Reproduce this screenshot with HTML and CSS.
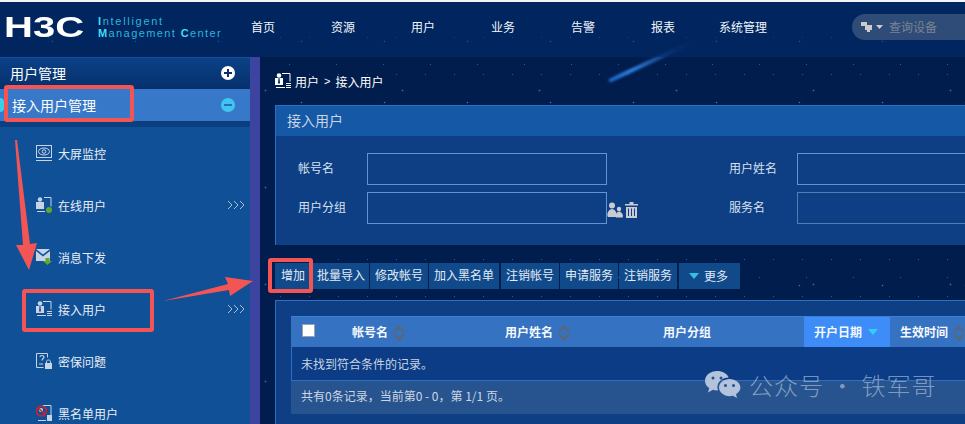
FILE: index.html
```html
<!DOCTYPE html>
<html lang="en">
<head>
  <meta charset="utf-8" />
  <title>接入用户</title>
  <link rel="stylesheet" href="styles.css">
</head>
<body>
  <div class="page">
    <div class="streak"></div>

    <div class="top-bar">
      <div class="logo">
        <div class="logo-mark"><span>H3C</span></div>
        <div class="logo-text">
          <div class="logo-line1"><b>I</b>ntelligent</div>
          <div><b>M</b>anagement <b>C</b>enter</div>
        </div>
      </div>
      <div class="nav">
        <div class="nav-item">首页</div>
        <div class="nav-item">资源</div>
        <div class="nav-item">用户</div>
        <div class="nav-item">业务</div>
        <div class="nav-item">告警</div>
        <div class="nav-item">报表</div>
        <div class="nav-item">系统管理</div>
      </div>
      <div class="search">
        <svg width="22" height="12" viewBox="0 0 22 12"><path fill="#ccc" d="M0 1h6v4H0zM4 4h7v5H9v2H6V9H4z"/><path fill="#ccc" d="M15 4h7l-3.500 4z"/></svg>
        <span>查询设备</span>
      </div>
    </div>

    <div class="main">
      <div class="sidebar">
        <div class="side-head">
          <span>用户管理</span>
          <svg width="14" height="14" viewBox="0 0 14 14"><circle cx="7" cy="7" r="7" fill="#fff"/><path stroke="#0a2f66" stroke-width="2" d="M3 7h8M7 3v8"/></svg>
        </div>
        <div class="side-active">
          <span>接入用户管理</span>
          <svg width="14" height="14" viewBox="0 0 14 14"><circle cx="7" cy="7" r="7" fill="#3fc6ee"/><path stroke="#2a6cc0" stroke-width="2" d="M3 7h8"/></svg>
        </div>
        <div class="side-gap"></div>
        <div class="side-list">
          <div class="side-item">
            <svg class="item-icon" viewBox="0 0 16 16" fill="none" stroke="#c6d4e6"><rect x=".5" y=".5" width="15" height="12"/><ellipse cx="8" cy="6.500" rx="5.500" ry="3.500"/><circle cx="8" cy="6.500" r="1.800"/><path d="M0 15.500h16"/></svg>
            <span>大屏监控</span>
          </div>
          <div class="side-item">
            <svg class="item-icon" viewBox="0 0 16 16"><path fill="none" stroke="#c6d4e6" d="M8 .5h7v9M1 14.500h8"/><circle cx="4" cy="2.500" r="2.200" fill="#c6d4e6"/><path fill="#c6d4e6" d="M0 5h8v7H0z"/><circle cx="13" cy="13" r="3" fill="#5fa82a"/></svg>
            <span>在线用户</span>
            <svg class="more" width="17" height="10" viewBox="0 0 17 10" fill="none" stroke="#a9bfdc"><path d="M0 1l4 4-4 4M6 1l4 4-4 4M12 1l4 4-4 4"/></svg>
          </div>
          <div class="side-item">
            <svg class="item-icon" viewBox="0 0 16 16"><path fill="#c6d4e6" d="M0 0h14L7 5.500zM0 2l7 5.500L14 2v10H0z"/><path fill="#5fa82a" d="M9.500 9h4v3H16l-4.500 4L7 12h2.500z"/></svg>
            <span>消息下发</span>
          </div>
          <div class="side-item">
            <svg class="item-icon" viewBox="0 0 16 16"><use href="#user-doc"/></svg>
            <span>接入用户</span>
            <svg class="more" width="17" height="10" viewBox="0 0 17 10" fill="none" stroke="#a9bfdc"><path d="M0 1l4 4-4 4M6 1l4 4-4 4M12 1l4 4-4 4"/></svg>
          </div>
          <div class="side-item">
            <svg class="item-icon" viewBox="0 0 16 16"><path fill="none" stroke="#c6d4e6" d="M.5.500h11v4M.5.500v14h7"/><path fill="none" stroke="#c6d4e6" stroke-width="1.200" d="M4 4c0-2 4-2 4 0 0 1.500-2 1.500-2 3.500M3 11h4"/><path fill="#c6d4e6" d="M9 10h7v6H9z"/><path fill="none" stroke="#c6d4e6" d="M10.500 10V8.500c0-2 4-2 4 0V10"/></svg>
            <span>密保问题</span>
          </div>
          <div class="side-item">
            <svg class="item-icon" viewBox="0 0 16 16"><path fill="none" stroke="#c6d4e6" d="M7 .5h8v10M2 15.500h8"/><path fill="#c6d4e6" d="M11 10h5v6h-5z"/><circle cx="5" cy="5" r="2" fill="#c6d4e6"/><circle cx="5.500" cy="6" r="5" fill="none" stroke="#d8202c" stroke-width="1.500"/><path stroke="#d8202c" stroke-width="1.500" d="M2 2.500l7 7"/></svg>
            <span>黑名单用户</span>
          </div>
        </div>
      </div>
      <div class="side-stripe"></div>

      <div class="content">
        <div class="crumb">
          <svg class="crumb-icon" viewBox="0 0 16 16"><use href="#user-doc-white"/></svg>
          <span>用户</span><span class="crumb-sep">&gt;</span><span>接入用户</span>
        </div>

        <div class="panel">
          <div class="panel-title">接入用户</div>
          <div class="form">
            <label>帐号名</label>
            <div class="field"></div>
            <div></div>
            <label>用户姓名</label>
            <div class="field"></div>
            <label>用户分组</label>
            <div class="field"></div>
            <div class="field-tools">
              <svg width="16" height="16" viewBox="0 0 16 16" fill="#c8ccd2"><circle cx="5" cy="3.500" r="3"/><path d="M1 15c-2-3 1-8 4-8s6 5 4 8z"/><circle cx="12" cy="7" r="2.200"/><path d="M9 15.500c-1-2 .5-6 3-6s5 4 3.500 6z"/></svg>
              <svg width="13" height="16" viewBox="0 0 13 16" fill="#c8ccd2"><path d="M0 2h4.500V0h4v2H13v1.500H0zM1 5h11v11H1zm2 1.500V14h1V6.500zm3 0V14h1V6.500zm3 0V14h1V6.500z" fill-rule="evenodd"/></svg>
            </div>
            <label>服务名</label>
            <div class="field field-dim"></div>
          </div>
        </div>

        <div class="toolbar">
          <div class="tool-btn tool-first">增加</div>
          <div class="tool-btn tool-tight">批量导入</div>
          <div class="tool-btn">修改帐号</div>
          <div class="tool-btn tool-wide">加入黑名单</div>
          <div class="tool-btn">注销帐号</div>
          <div class="tool-btn">申请服务</div>
          <div class="tool-btn">注销服务</div>
          <div class="tool-btn tool-more"><i class="caret"></i>更多</div>
        </div>

        <div class="panel table-panel">
          <div class="grid-head">
            <div class="col col-check"><i class="check"></i></div>
            <div class="col col-name">帐号名<i class="sort"></i></div>
            <div class="col col-user">用户姓名<i class="sort"></i></div>
            <div class="col col-group">用户分组</div>
            <div class="col col-date">开户日期<i class="caret caret-cyan"></i></div>
            <div class="col col-time">生效时间<i class="sort"></i></div>
          </div>
          <div class="grid-empty">未找到符合条件的记录。</div>
          <div class="grid-foot">共有0条记录，当前第0 - 0，第 1/1 页。</div>
        </div>
      </div>
    </div>

    <svg class="marks" width="965" height="424" viewBox="0 0 965 424">
      <g fill="none" stroke="#f35555" stroke-width="4">
        <rect x="6" y="87" width="126" height="33" rx="1"/>
        <rect x="24" y="291" width="128" height="39" rx="1"/>
        <rect x="270" y="260" width="41" height="31" rx="1"/>
      </g>
      <g fill="#f35555">
        <path d="M15 140h2l13 104 7-1-8 27-13-25 7 0z"/>
        <path d="M163 301l65-17-3-7 28 4-23 15-1-6z"/>
      </g>
    </svg>

    <div class="watermark">
      <svg width="36" height="30" viewBox="0 0 36 30"><path fill="#b3c3dc" d="M12 1C5.500 1 0 5.300 0 10.700c0 3 1.700 5.600 4.300 7.400L3 22.500l5-2.700c1.300.4 2.700.6 4.100.6.100 0 .6 0 .9-.1-.4-1.100-.6-2.200-.6-3.300 0-5.300 5-9.600 11.300-9.600C22 3.600 17.500 1 12 1z"/><path fill="#b3c3dc" d="M24.500 9C18.700 9 14 12.900 14 17.600s4.700 8.600 10.500 8.600c1.200 0 2.300-.2 3.400-.5l4.100 2.200-1-3.600c2.700-1.600 4.400-4 4.400-6.700C35.500 12.900 30.300 9 24.500 9z"/><circle cx="8" cy="8" r="1.500" fill="#274f8d"/><circle cx="16" cy="8" r="1.500" fill="#274f8d"/><circle cx="20.500" cy="15.500" r="1.500" fill="#274f8d"/><circle cx="28.500" cy="15.500" r="1.500" fill="#274f8d"/></svg>
      <span>公众号 · 铁军哥</span>
    </div>
  </div>

  <svg width="0" height="0" class="defs">
    <symbol id="user-doc" viewBox="0 0 16 16"><path fill="none" stroke="#c6d4e6" d="M7 .5h8v8M1 14.500h9"/><circle cx="4" cy="2.500" r="2.300" fill="#c6d4e6"/><path fill="#c6d4e6" d="M0 5h8v7H0z"/><path fill="#274f8d" d="M3.500 5h1l.5 5-1 1-1-1z"/><path stroke="#c6d4e6" d="M11 10.500h5M11 12.500h5M11 14.500h5"/></symbol>
    <symbol id="user-doc-white" viewBox="0 0 16 16"><path fill="none" stroke="#fff" d="M7 .5h8v8M1 14.500h9"/><circle cx="4" cy="2.500" r="2.300" fill="#fff"/><path fill="#fff" d="M0 5h8v7H0z"/><path fill="#02205a" d="M3.500 5h1l.5 5-1 1-1-1z"/><path stroke="#fff" d="M11 10.500h5M11 12.500h5M11 14.500h5"/></symbol>
  </svg>
</body>
</html>
```

FILE: styles.css
```css
* {
  box-sizing: border-box;
}
body {
  margin: 0;
  background: #011d4d;
  font-family: "Noto Sans CJK SC", "Liberation Sans", sans-serif;
  font-size: 12px;
  color: #fff;
  overflow: hidden;
}
.page {
  position: relative;
  width: 965px;
  height: 424px;
  overflow: hidden;
  border-top: 2px solid #f2f4f7;
  background-color: #011d4d;
  background-image:
    radial-gradient(circle, #2a7fd6 0, transparent 1.2px),
    radial-gradient(circle, #1c5fae 0, transparent 1px),
    radial-gradient(circle, #2569bd 0, transparent 1.5px),
    radial-gradient(circle, #1c5fae 0, transparent 1px);
  background-size: 83px 61px, 47px 71px, 137px 97px, 29px 37px;
  background-position: 11px 9px, 31px 27px, 60px 40px, 5px 17px;
}
.defs {
  position: absolute;
}

/* top bar */
.top-bar {
  position: relative;
  display: flex;
  align-items: center;
  height: 55px;
  background-color: rgba(1, 44, 110, .55);
  padding-bottom: 6px;
}
.logo {
  display: flex;
  align-items: center;
  width: 223px;
  flex: none;
}
.logo-mark {
  width: 98px;
  padding-left: 4px;
  font-family: "Liberation Sans", sans-serif;
  font-size: 29px;
  font-weight: 700;
  line-height: 28px;
  color: #fff;
}
.logo-mark span {
  display: inline-block;
  transform: scaleX(1.38);
  transform-origin: left center;
}
.logo-text {
  font-family: "Liberation Sans", sans-serif;
  font-size: 11px;
  line-height: 12px;
  letter-spacing: 1.4px;
  color: #2cb5da;
}
.logo-line1 {
  letter-spacing: 1.7px;
}
.logo-text b {
  color: #3fdcf5;
}
.nav {
  display: flex;
  flex: none;
}
.nav-item {
  width: 80px;
  text-align: center;
  line-height: 18px;
  color: #f2f5fa;
}
.search {
  display: flex;
  align-items: center;
  gap: 6px;
  margin-left: 69px;
  width: 130px;
  height: 26px;
  padding-left: 9px;
  border-radius: 13px;
  background: #2f4c78;
  color: #7a8391;
  flex: none;
}

/* layout */
.main {
  position: relative;
  display: flex;
  height: 367px;
}
.sidebar {
  width: 250px;
  flex: none;
  background: #105096;
}
.side-head {
  display: flex;
  justify-content: space-between;
  align-items: center;
  height: 32px;
  padding: 0 15px 2px 10px;
  font-size: 14px;
  background: linear-gradient(#0b4186, #06306c);
  border-top: 1px solid #124f9c;
}
.side-active {
  position: relative;
  display: flex;
  justify-content: space-between;
  align-items: center;
  height: 32px;
  padding: 0 15px 1px 12px;
  font-size: 14px;
  background: #3878c8;
}
.side-active::before {
  content: "";
  position: absolute;
  left: -4px;
  top: 9px;
  width: 8px;
  height: 14px;
  border-radius: 4px;
  background: #36d0ea;
}
.side-gap {
  height: 6px;
  background: #0b3f80;
}
.side-item {
  display: flex;
  align-items: center;
  gap: 6px;
  height: 52px;
  padding-left: 36px;
  color: #e8eef6;
}
.item-icon {
  width: 16px;
  height: 16px;
  flex: none;
}
.more {
  margin-left: auto;
  margin-right: 5px;
}
.side-stripe {
  width: 10px;
  flex: none;
  background: #3c44a0;
}
.content {
  flex: none;
  width: 705px;
  padding-left: 15px;
}
.crumb {
  display: flex;
  align-items: center;
  height: 48px;
  color: #fff;
}
.crumb-icon {
  width: 16px;
  height: 16px;
  margin-right: 4px;
}
.crumb-sep {
  margin: 0 5px;
  font-family: "Liberation Sans", sans-serif;
  font-size: 11px;
}

/* panels */
.panel {
  width: 720px;
  border: 1px solid #2c6fc0;
  border-width: 1px 0 0 1px;
  background: #0e3f84;
}
.panel-title {
  height: 30px;
  padding-left: 11px;
  background: #1558a6;
  font-size: 14px;
  line-height: 28px;
  color: #c9d6e6;
}
.form {
  display: grid;
  grid-template-columns: 69px 240px 122px 68px 240px;
  grid-auto-rows: 32px;
  row-gap: 7px;
  align-items: center;
  height: 109px;
  padding: 17px 0 0 22px;
}
.form label {
  padding-bottom: 3px;
  color: #d7e1ee;
}
.field {
  height: 32px;
  border: 1px solid #5b98d2;
}
.field-dim {
  border-color: #4a7fb8;
}
.field-tools {
  display: flex;
  align-items: center;
  gap: 2px;
  padding-top: 4px;
}

/* toolbar */
.toolbar {
  display: flex;
  gap: 1px;
  height: 26px;
  margin-top: 18px;
  white-space: nowrap;
}
.tool-btn {
  padding: 0 5px;
  line-height: 24px;
  background: #114a8a;
  color: #e3ebf5;
}
.tool-first {
  width: 37px;
  padding: 0 6px;
}
.tool-tight {
  padding: 0 4px;
}
.tool-wide {
  margin-right: 1px;
}
.tool-more {
  display: flex;
  align-items: center;
  gap: 5px;
  width: 61px;
  padding-left: 10px;
  margin-left: 1px;
}
.caret {
  width: 0;
  height: 0;
  border: 5px solid transparent;
  border-top: 6px solid #35bfe6;
  border-bottom: 0;
}

/* table */
.table-panel {
  margin-top: 11px;
  padding: 15px 0 11px 15px;
}
.grid-head {
  display: flex;
  align-items: center;
  height: 31px;
  background: #3572c2;
  border-top: 1px solid #3c80d6;
  font-weight: 700;
  line-height: 28px;
  color: #f5f8fc;
}
.col {
  display: flex;
  align-items: center;
  height: 100%;
  padding-bottom: 1px;
  flex: none;
}
.col-check {
  width: 61px;
  padding-left: 11px;
}
.check {
  width: 13px;
  height: 13px;
  margin-top: -3px;
  background: #fff;
  border: 1px solid #9aa3ad;
}
.col-name {
  width: 153px;
}
.col-user {
  width: 158px;
}
.col-group {
  width: 141px;
}
.col-date {
  width: 86px;
  padding-left: 10px;
  background: #3d8cf8;
}
.col-time {
  padding-left: 10px;
}
.sort {
  position: relative;
  width: 7px;
  height: 12px;
  margin-left: 7px;
}
.sort::before {
  content: "";
  position: absolute;
  left: 0;
  top: 1px;
  width: 6px;
  height: 6px;
  border: solid #5f6670;
  border-width: 2px 0 0 2px;
  transform: rotate(45deg);
}
.sort::after {
  content: "";
  position: absolute;
  left: 0;
  top: 5px;
  width: 6px;
  height: 6px;
  border: solid #5f6670;
  border-width: 0 2px 2px 0;
  transform: rotate(45deg);
}
.caret-cyan {
  margin-left: 6px;
  border-top-color: #2fd0f5;
}
.grid-empty {
  height: 34px;
  padding-left: 9px;
  line-height: 34px;
  background: #0b3c85;
  border: solid #2c6fc0;
  border-width: 0 0 1px 1px;
  color: #c9d4e2;
}
.grid-foot {
  height: 33px;
  padding-left: 10px;
  line-height: 29px;
  background: #27548f;
  color: #ccd6e3;
}

/* overlays */
.streak {
  position: absolute;
  left: 604px;
  top: 56px;
  width: 100px;
  height: 4px;
  border-radius: 2px;
  background: linear-gradient(90deg, #1a5fc0, #2e7fe0 25%, rgba(30, 90, 180, .25) 75%, transparent);
  transform: rotate(-25deg);
  filter: blur(1px);
}
.marks {
  position: absolute;
  left: 0;
  top: -2px;
}
.watermark {
  position: absolute;
  left: 705px;
  top: 368px;
  display: flex;
  align-items: center;
  gap: 8px;
  font-size: 24px;
  line-height: 30px;
  letter-spacing: 1px;
  color: rgba(190, 203, 224, .62);
  font-weight: 300;
}
```
